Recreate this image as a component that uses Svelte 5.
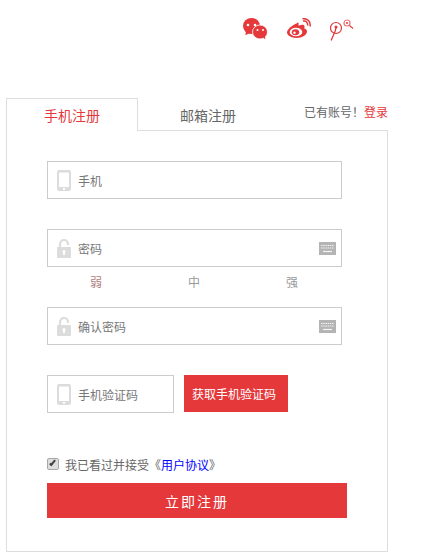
<script>
  const strengths = ['弱', '中', '强'];
</script>

{#snippet phone()}
  <svg class="ico" width="14" height="21" viewBox="0 0 14 21">
    <path fill="#dcdcdc" fill-rule="evenodd" d="M2 0h10a2 2 0 0 1 2 2v17a2 2 0 0 1-2 2H2a2 2 0 0 1-2-2V2a2 2 0 0 1 2-2zM2 2.500v14.500h10V2.500zM7 17.800a1.100 1.100 0 1 0 0 2.200 1.100 1.100 0 0 0 0-2.200z" />
  </svg>
{/snippet}

{#snippet lock()}
  <svg class="ico" width="14" height="19" viewBox="0 0 14 19">
    <path fill="none" stroke="#dcdcdc" stroke-width="2.200" d="M3 8V5a4 4 0 0 1 8 0v1" />
    <path fill="#dcdcdc" fill-rule="evenodd" d="M1 8h12a1 1 0 0 1 1 1v9a1 1 0 0 1-1 1H1a1 1 0 0 1-1-1V9a1 1 0 0 1 1-1zM7 11a1.600 1.600 0 0 0-.9 2.900V16h1.800v-2.100A1.600 1.600 0 0 0 7 11z" />
  </svg>
{/snippet}

{#snippet keyboard()}
  <svg class="kbd" width="17" height="13" viewBox="0 0 17 13">
    <rect width="17" height="13" fill="#b4b4b4" />
    <path stroke="#f4f4f4" stroke-width="1" stroke-dasharray="1.500 .7" d="M2 3.500h13M2 6h13" />
    <path stroke="#f4f4f4" stroke-width="1.200" d="M4 9.500h9" />
  </svg>
{/snippet}

<div class="page">
  <div class="social">
    <svg width="25" height="22" viewBox="0 0 25 22">
      <ellipse cx="8.500" cy="8" rx="8.500" ry="8" fill="#e5383b" />
      <path fill="#e5383b" d="M3 13l-.6 4.200L7 15z" />
      <circle cx="5" cy="7" r="1.300" fill="#fff" />
      <circle cx="12" cy="7" r="1.300" fill="#fff" />
      <ellipse cx="17" cy="14" rx="7.500" ry="7" fill="#e5383b" stroke="#fff" stroke-width=".8" />
      <path fill="#e5383b" d="M20 19l2.200 2.500-.2-4z" />
      <circle cx="14.500" cy="12" r="1" fill="#fff" />
      <circle cx="20" cy="12" r="1" fill="#fff" />
    </svg>
    <svg width="24" height="20" viewBox="0 0 24 20">
      <path fill="#e5383b" d="M10 5.200C5.200 7 0 11.300 0 14.300 0 17.600 4.500 20 9.400 20c6 0 10.600-3.500 10.600-6.500 0-1.700-1.500-2.700-2.800-3 .4-1 .7-2.400-.3-3.200-1-.8-2.800-.6-4.700.2-.6.200-.9 0-.7-.7.300-1.500 0-2.200-.6-2.300-.2 0-.5.100-.9.700z" />
      <ellipse cx="9" cy="14" rx="6.300" ry="4.300" fill="#fff" />
      <ellipse cx="8.500" cy="14.300" rx="3.700" ry="3" fill="#e5383b" />
      <circle cx="7.500" cy="14.700" r="1.200" fill="#fff" />
      <path fill="none" stroke="#e5383b" stroke-width="1.500" d="M16 3c3-.6 5 1.500 4.600 4.600M15.500 .8C20.500 0 24 3.500 23 8.500" />
    </svg>
    <svg width="24" height="24" viewBox="0 0 24 24">
      <circle cx="6" cy="10" r="5.500" fill="none" stroke="#e5383b" stroke-width="1.200" />
      <circle cx="6" cy="9" r="1.500" fill="#e5383b" />
      <path fill="none" stroke="#e5383b" stroke-width="1.300" d="M6 9.500C5.800 14 2.500 18 1.200 22.500" />
      <circle cx="17" cy="5" r="3" fill="none" stroke="#e8787a" stroke-width="1.200" />
      <circle cx="17" cy="5" r="1" fill="#e5383b" />
      <path stroke="#e5383b" stroke-width="1.100" d="M19.500 7.500L23 10.500" />
    </svg>
  </div>

  <div class="tabs">
    <div class="tab active">手机注册</div>
    <div class="tab">邮箱注册</div>
    <div class="login">已有账号！<a href="#login">登录</a></div>
  </div>

  <form class="panel">
    <label class="field">
      {@render phone()}
      <input placeholder="手机" />
    </label>

    <label class="field pwd">
      {@render lock()}
      <input placeholder="密码" />
      {@render keyboard()}
    </label>
    <div class="strength">
      {#each strengths as s, i}
        <span class:weak={i === 0}>{s}</span>
      {/each}
    </div>

    <label class="field confirm">
      {@render lock()}
      <input placeholder="确认密码" />
      {@render keyboard()}
    </label>

    <div class="code-row">
      <label class="field code">
        {@render phone()}
        <input placeholder="手机验证码" />
      </label>
      <button type="button" class="send">获取手机验证码</button>
    </div>

    <label class="agree">
      <input type="checkbox" checked />
      <span>我已看过并接受《<a href="#terms">用户协议</a>》</span>
    </label>

    <button type="button" class="submit">立即注册</button>
  </form>
</div>

<style>
  :global(body) {
    margin: 0;
    background: #fff;
  }

  .page {
    width: 441px;
    height: 556px;
    overflow: hidden;
    font-family: "Liberation Sans", "Noto Sans CJK SC", sans-serif;
    font-size: 12px;
    color: #666;
  }

  .social {
    display: flex;
    align-items: flex-start;
    gap: 19px;
    height: 98px;
    box-sizing: border-box;
    padding: 18px 0 0 243px;
  }

  .tabs {
    display: flex;
    width: 382px;
    margin-left: 6px;
    height: 33px;
  }

  .tab {
    width: 132px;
    box-sizing: border-box;
    padding-top: 9px;
    text-align: center;
    font-size: 14px;
    line-height: 16px;
    color: #666;
  }

  .tab + .tab {
    width: 140px;
    padding-top: 10px;
  }

  .tab.active {
    position: relative;
    z-index: 1;
    height: 33px;
    color: #e5383b;
    background: #fff;
    border: 1px solid #ddd;
    border-bottom: none;
  }

  .login {
    flex: 1;
    padding-top: 8px;
    text-align: right;
    font-size: 12px;
    line-height: 14px;
    white-space: nowrap;
  }

  .login a {
    color: #e5383b;
    text-decoration: none;
  }

  .panel {
    box-sizing: border-box;
    width: 382px;
    height: 422px;
    margin: -1px 0 0 6px;
    padding: 30px 0 0 40px;
    border: 1px solid #ddd;
  }

  .field {
    display: flex;
    align-items: center;
    box-sizing: border-box;
    width: 295px;
    height: 38px;
    padding: 0 5px 0 9px;
    border: 1px solid #ccc;
  }

  .ico {
    flex: none;
  }

  input:not([type]) {
    flex: 1;
    min-width: 0;
    margin-left: 7px;
    padding: 3px 0 0;
    border: none;
    outline: none;
    background: none;
    font: inherit;
    color: #666;
  }

  input::placeholder {
    color: #777;
    opacity: 1;
  }

  .kbd {
    flex: none;
  }

  .pwd {
    margin-top: 30px;
  }

  .strength {
    display: flex;
    width: 295px;
    height: 40px;
    padding-top: 9px;
    box-sizing: border-box;
    font-size: 12px;
    line-height: 14px;
    color: #999;
  }

  .strength span {
    width: 98px;
    text-align: center;
  }

  .strength .weak {
    color: #b08080;
  }

  .code-row {
    display: flex;
    align-items: flex-start;
    gap: 10px;
    margin-top: 30px;
  }

  .code {
    width: 127px;
  }

  .send {
    width: 104px;
    height: 37px;
    padding: 0 0 0 8px;
    border: none;
    background: #e5383b;
    color: #fff;
    font: inherit;
    font-size: 12px;
    text-align: left;
  }

  .agree {
    display: flex;
    align-items: center;
    margin-top: 44px;
    height: 14px;
    font-size: 12px;
    color: #666;
  }

  .agree input {
    appearance: none;
    position: relative;
    box-sizing: border-box;
    width: 12px;
    height: 12px;
    margin: 0 6px 0 0;
    background: #dedede;
    border: 1px solid #a8a8a8;
    border-radius: 2px;
  }

  .agree input:checked::after {
    content: "";
    position: absolute;
    left: 3px;
    top: 0;
    width: 3px;
    height: 7px;
    box-sizing: border-box;
    border: solid #444;
    border-width: 0 2px 2px 0;
    transform: rotate(40deg);
  }

  .agree a {
    color: #00f;
    text-decoration: none;
  }

  .submit {
    display: block;
    width: 300px;
    height: 35px;
    margin-top: 12px;
    padding: 0;
    border: none;
    background: #e5383b;
    color: #fff;
    font: inherit;
    font-size: 14px;
    letter-spacing: 2px;
  }
</style>
